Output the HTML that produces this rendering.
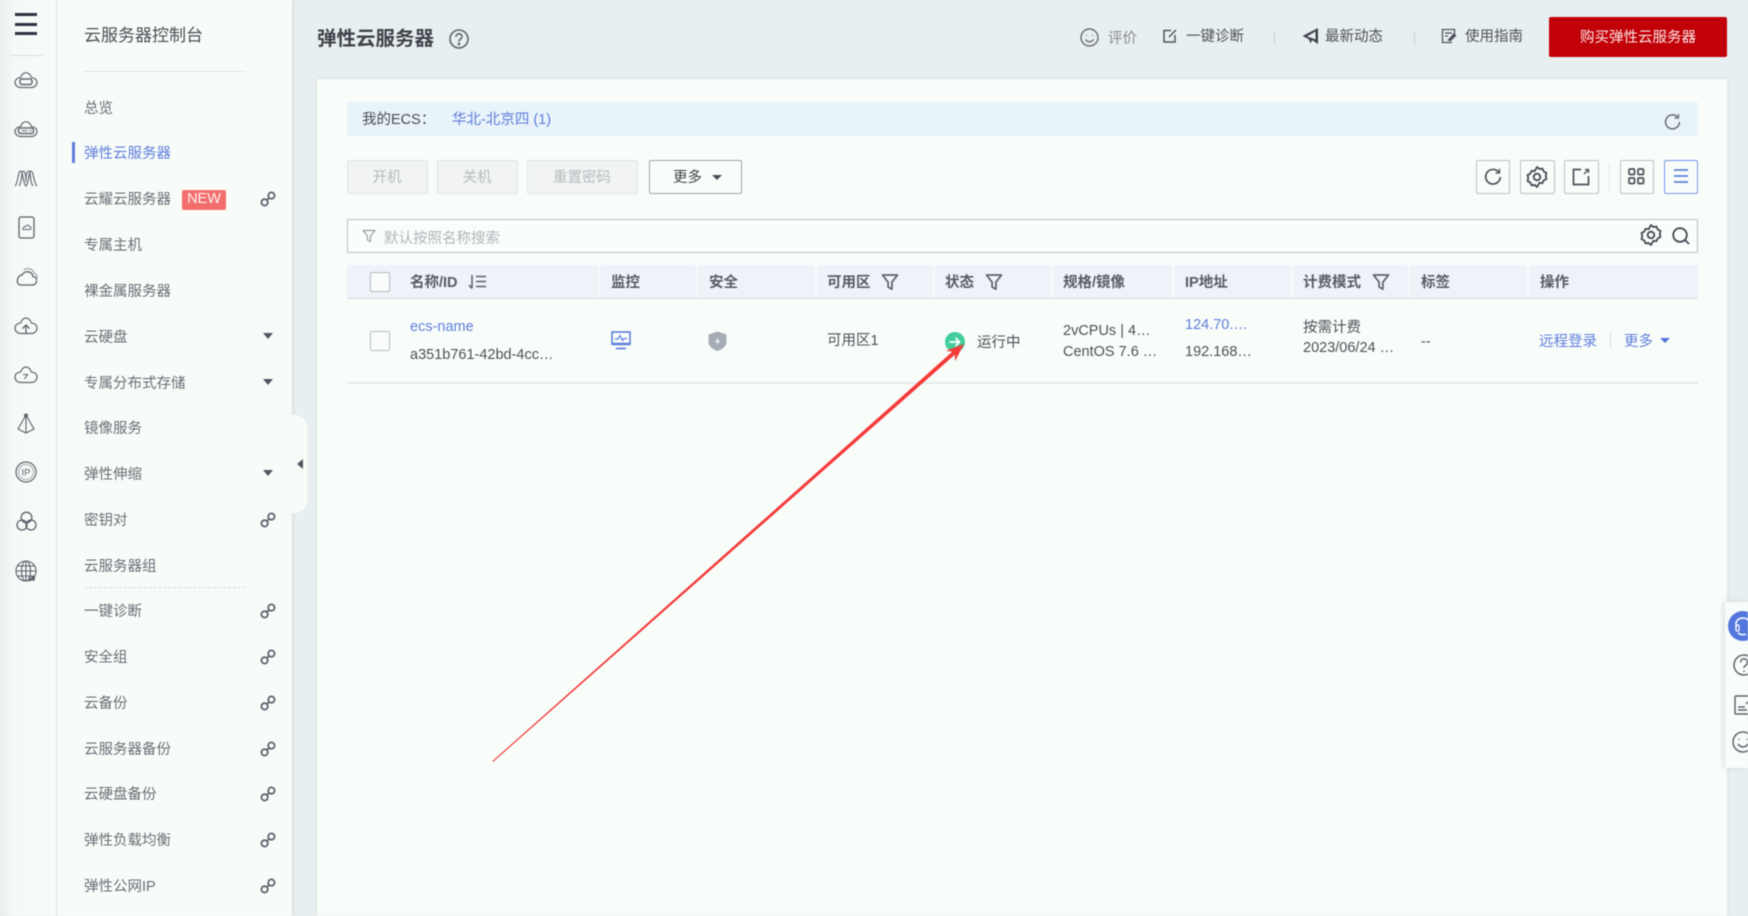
<!DOCTYPE html>
<html lang="zh"><head><meta charset="utf-8"><title>弹性云服务器</title>
<style>
html,body{margin:0;padding:0;width:1748px;height:916px;overflow:hidden;background:#e8eff0}
body{position:relative;font-family:"Liberation Sans","WenQuanYi Zen Hei","Noto Sans CJK SC",sans-serif;font-size:14.5px;color:#4d5158;filter:blur(.55px)}
.a{position:absolute}
.t{position:absolute;line-height:20px;white-space:nowrap;margin-top:1.5px}
.l{margin-top:0;font-size:14.5px}
.s{color:#6a6e76;margin-top:1px}
.b{color:#5f7edb}
.h{color:#565b66;font-weight:bold;font-size:14.5px;margin-top:1px}
svg{position:absolute;overflow:visible;fill:none}
.btn{position:absolute;top:160px;height:32px;border:1px solid #dfe3e4;border-radius:2px;background:#f1f4f3;color:#b7bbbf;text-align:center;line-height:35px;box-sizing:content-box;text-indent:-1px}
.ib{position:absolute;top:160px;height:32px;border:1px solid #b9bfc6;border-radius:2px;background:#f8fdfa;box-sizing:content-box}
.cb{position:absolute;width:18px;height:18px;border:1px solid #b6bbc2;border-radius:2px;background:#fbfdfc}
</style></head><body>
<svg width="0" height="0" style="position:absolute"><defs>
<symbol id="lk" viewBox="0 0 16 16"><g fill="none" stroke="#5c6470" stroke-width="1.800"><circle cx="4.600" cy="11.400" r="3.200"/><circle cx="11.400" cy="4.600" r="3.200"/><path d="M6.600 9.400l2.800-2.800"/></g></symbol>
<symbol id="fl" viewBox="0 0 18 18"><path d="M1.500 2h15l-5.600 7.200v7l-3.800-2.200V9.200z" fill="none" stroke="#5c626c" stroke-width="1.700" stroke-linejoin="round"/></symbol>
<symbol id="gr" viewBox="0 0 20 20"><g fill="none" stroke="#4a4f58" stroke-width="1.700"><path d="M10 1l2.200 1.700 2.700-.3 1.200 2.500 2.400 1.300-.5 2.800.5 2.800-2.400 1.300-1.200 2.500-2.700-.3L10 19l-2.200-1.700-2.700.3-1.200-2.500-2.400-1.300.5-2.800-.5-2.800 2.400-1.300 1.200-2.500 2.700.3z"/><circle cx="10" cy="10" r="3"/></g></symbol>
</defs></svg>

<!-- rail -->
<div class="a" style="left:0;top:0;width:56px;height:916px;background:linear-gradient(90deg,#e9eeee 0,#f5f9f7 14px,#f8fcf9 100%);border-right:1px solid #dde2e3"></div>
<div class="a" style="left:15px;top:13px;width:22px;height:2.500px;background:#2b3242"></div>
<div class="a" style="left:15px;top:23px;width:22px;height:2.500px;background:#2b3242"></div>
<div class="a" style="left:15px;top:32px;width:22px;height:2.500px;background:#2b3242"></div>
<div class="a" style="left:10px;top:55px;width:33px;height:1px;background:#d9dddf"></div>
<svg style="left:14px;top:72px" width="24" height="17" stroke="#62676f" stroke-width="1.200"><path d="M6.500 15.500h11c3 0 5.500-2.500 5.500-5s-2.500-5-5.500-4.800C16.500 2.200 14 .7 12 .7S7.500 2.200 6.500 5.700C3.500 5.500 1 8 1 10.500s2.500 5 5.500 5z"/><rect x="6" y="7" width="12" height="5.500" rx="2" stroke-width="1.500"/></svg>
<svg style="left:14px;top:121px" width="24" height="17" stroke="#62676f" stroke-width="1.200"><path d="M6.500 15.500h11c3 0 5.500-2.500 5.500-5s-2.500-5-5.500-4.800C16.500 2.200 14 .7 12 .7S7.500 2.200 6.500 5.700C3.500 5.500 1 8 1 10.500s2.500 5 5.500 5z"/><rect x="4.500" y="7" width="15" height="5.500" rx="2" stroke-width="1.500"/><path d="M7.500 9.700h6M15.500 9.700h2" stroke-width="1"/></svg>
<svg style="left:14px;top:168px" width="24" height="20" stroke="#5d636d" stroke-width="1.100"><path d="M1 18c3-2 3-15 5.500-15S9 16 12 18c3-2 2.500-15 5-15s3 13 6 15M5 18c3-2 2-15 4.500-15S12 14 12 14M19 18c-3-2-2-15-4.500-15S12 12 12 12"/></svg>
<svg style="left:18px;top:216px" width="17" height="23" stroke="#5d636d" stroke-width="1.300"><rect x="1" y="1" width="15" height="21" rx="2"/><path d="M5.500 13.500h6c2 0 2-2.500 .3-2.700-.5-2-3.800-2-4.500 0-2 0-3.300 2.500-1.800 2.700z" stroke-width="1"/></svg>
<svg style="left:15px;top:267px" width="23" height="20" stroke="#5d636d" stroke-width="1.300"><path d="M6 18h11c6 0 6-8 1-8.500C17 4 10 3 7 8 2 8 0 18 6 18z"/><path d="M9 3c3-3 9-1 10 3 3 1 4 5 2 8" stroke="#a3a8ae"/></svg>
<svg style="left:14px;top:317px" width="24" height="18" stroke="#5d636d" stroke-width="1.200"><path d="M6.500 16.500h11c3 0 5.500-2.500 5.500-5.500s-2.500-5-5.500-4.800C16.500 2.700 14 1 12 1S7.500 2.700 6.500 6.200C3.500 6 1 8 1 11s2.500 5.500 5.500 5.500z"/><path d="M12 16V8.500M8.500 11.500L12 8l3.500 3.500" stroke-width="1.300"/></svg>
<svg style="left:14px;top:366px" width="24" height="18" stroke="#5d636d" stroke-width="1.200"><path d="M6.500 16.500h11c3 0 5.500-2.500 5.500-5.500s-2.500-5-5.500-4.800C16.500 2.700 14 1 12 1S7.500 2.700 6.500 6.200C3.500 6 1 8 1 11s2.500 5.500 5.500 5.500z"/><path d="M9 8.500h4.500l-3 4.500" stroke-width="1.100"/></svg>
<svg style="left:16px;top:413px" width="20" height="22" stroke="#5d636d" stroke-width="1.100"><path d="M10 2L2 16l8 4 8-4zM10 2v18"/><circle cx="10" cy="2.500" r="1.500" fill="#5d636d"/></svg>
<svg style="left:15px;top:461px" width="22" height="22" stroke="#5d636d" stroke-width="1.200"><circle cx="11" cy="11" r="10"/><circle cx="11" cy="11" r="7.500" stroke="#b3b7bc"/><text x="6.500" y="14.500" font-size="9.500" fill="#5d636d" stroke="none" font-family="Liberation Sans">IP</text></svg>
<svg style="left:16px;top:511px" width="21" height="20" stroke="#5d636d" stroke-width="1.300"><circle cx="10.500" cy="6.500" r="5.300"/><circle cx="6" cy="14" r="5"/><circle cx="15" cy="14" r="5"/></svg>
<svg style="left:15px;top:560px" width="22" height="22" stroke="#5d636d" stroke-width="1.100"><circle cx="11" cy="11" r="10"/><ellipse cx="11" cy="11" rx="4.500" ry="10"/><path d="M1 11h20M2.500 6h17M2.500 16h17M11 1v20"/><text x="14" y="21" font-size="8" font-weight="bold" fill="#3b4049" stroke="none" font-family="Liberation Sans">w</text></svg>

<!-- sidebar -->
<div class="a" style="left:57px;top:0;width:235px;height:916px;background:#f8fcf9;box-shadow:1px 0 3px rgba(120,130,135,.18)"></div>
<div class="a" style="left:292px;top:415px;width:15px;height:98px;background:#f8fcf9;border-radius:0 12px 12px 0"></div>
<div class="a" style="left:297px;top:459px;width:0;height:0;border:5px solid transparent;border-left:0;border-right:6px solid #505661"></div>
<div class="t" style="left:84px;top:24px;font-size:17px;color:#4a4e55">云服务器控制台</div>
<div class="a" style="left:84px;top:71px;width:162px;height:1px;background:#dfe3e6"></div>
<div class="a" style="left:72px;top:142px;width:3px;height:21px;background:#5f7edb"></div>
<div class="a" style="left:84px;top:587px;width:162px;height:0;border-top:1px dashed #d5d9dc"></div>
<div class="t s" style="left:84px;top:97.500px">总览</div>
<div class="t b" style="left:84px;top:142.500px">弹性云服务器</div>
<div class="t s" style="left:84px;top:189px">云耀云服务器</div>
<div class="a" style="left:182px;top:190px;width:44px;height:20px;background:#f26d6c;border-radius:2px;color:#fdf3f2;font-size:14.500px;line-height:18px;text-align:center">NEW</div>
<div class="t s" style="left:84px;top:235px">专属主机</div>
<div class="t s" style="left:84px;top:281px">裸金属服务器</div>
<div class="t s" style="left:84px;top:327px">云硬盘</div>
<div class="t s" style="left:84px;top:373px">专属分布式存储</div>
<div class="t s" style="left:84px;top:418px">镜像服务</div>
<div class="t s" style="left:84px;top:464px">弹性伸缩</div>
<div class="t s" style="left:84px;top:510px">密钥对</div>
<div class="t s" style="left:84px;top:556px">云服务器组</div>
<div class="t s" style="left:84px;top:601px">一键诊断</div>
<div class="t s" style="left:84px;top:647px">安全组</div>
<div class="t s" style="left:84px;top:692.500px">云备份</div>
<div class="t s" style="left:84px;top:738.500px">云服务器备份</div>
<div class="t s" style="left:84px;top:784px">云硬盘备份</div>
<div class="t s" style="left:84px;top:829.500px">弹性负载均衡</div>
<div class="t s" style="left:84px;top:875.500px">弹性公网IP</div>
<svg style="left:260px;top:191px" width="16" height="16"><use href="#lk"/></svg>
<svg style="left:260px;top:512px" width="16" height="16"><use href="#lk"/></svg>
<svg style="left:260px;top:603px" width="16" height="16"><use href="#lk"/></svg>
<svg style="left:260px;top:649px" width="16" height="16"><use href="#lk"/></svg>
<svg style="left:260px;top:695px" width="16" height="16"><use href="#lk"/></svg>
<svg style="left:260px;top:741px" width="16" height="16"><use href="#lk"/></svg>
<svg style="left:260px;top:786px" width="16" height="16"><use href="#lk"/></svg>
<svg style="left:260px;top:832px" width="16" height="16"><use href="#lk"/></svg>
<svg style="left:260px;top:878px" width="16" height="16"><use href="#lk"/></svg>
<div class="a" style="left:263px;top:333px;border:5px solid transparent;border-bottom:0;border-top:6px solid #505661"></div>
<div class="a" style="left:263px;top:379px;border:5px solid transparent;border-bottom:0;border-top:6px solid #505661"></div>
<div class="a" style="left:263px;top:470px;border:5px solid transparent;border-bottom:0;border-top:6px solid #505661"></div>

<!-- header -->
<div class="t" style="left:317px;top:27.500px;font-size:19.500px;font-weight:bold;color:#3e4249">弹性云服务器</div>
<svg style="left:449px;top:29px" width="20" height="20" stroke="#5f646d" stroke-width="1.600"><circle cx="10" cy="10" r="9"/><path d="M7 7.800c0-4 6-4 6-.2 0 2.400-3 2.200-3 5"/><circle cx="10" cy="15" r=".6" fill="#5f646d"/></svg>
<svg style="left:1080px;top:28px" width="19" height="19" stroke="#6a6e76" stroke-width="1.400"><circle cx="9.500" cy="9.500" r="8.500"/><path d="M5.500 11.500c2 3 6 3 8 0M6.500 7v.8M12.500 7v.8"/></svg>
<div class="t" style="left:1108px;top:27px;color:#85898f;font-size:14.500px">评价</div>
<svg style="left:1163px;top:29px" width="14" height="14" stroke="#4f545c" stroke-width="1.500"><path d="M8 1.500H1v11.500h11V6M6 8L13 1"/></svg>
<div class="t" style="left:1186px;top:25.500px">一键诊断</div>
<div class="a" style="left:1274px;top:32px;width:1px;height:12px;background:#c9cdd0"></div>
<svg style="left:1302px;top:27px" width="17" height="18"><path d="M16 1v16l-6-4-1.200 3.500L6.500 12 .5 9z M13.500 4.500L5 9.500l5.500 1.700 3 1.300z" fill="#3f444c" fill-rule="evenodd"/></svg>
<div class="t" style="left:1325px;top:25.500px">最新动态</div>
<div class="a" style="left:1414px;top:32px;width:1px;height:12px;background:#c9cdd0"></div>
<svg style="left:1441px;top:28px" width="15" height="16" stroke="#4f545c" stroke-width="1.300"><path d="M11 14.500H1.500v-13h12v5M4 5h7M4 8h3"/><path d="M7.500 12l5.500-6 1.500 1.500-5 5z" fill="#4f545c"/></svg>
<div class="t" style="left:1465px;top:25.500px">使用指南</div>
<div class="a" style="left:1549px;top:17px;width:178px;height:40px;background:#c10007;border-radius:2px;color:#fbe7e7;text-align:center;line-height:43px">购买弹性云服务器</div>

<!-- card -->
<div class="a" style="left:317px;top:79px;width:1410px;height:837px;background:#f8fdfa;box-shadow:0 0 4px rgba(130,140,150,.2)"></div>
<div class="a" style="left:347px;top:102px;width:1351px;height:34px;background:#e9f3fa;border-radius:2px"></div>
<div class="t" style="left:362px;top:108px;color:#4a4e55">我的ECS：</div>
<div class="t b" style="left:452px;top:108px">华北-北京四 (1)</div>
<svg style="left:1664px;top:113px" width="17" height="17" stroke="#676c74" stroke-width="1.500"><path d="M13.800 4.300A7 7 0 1 0 15.500 9"/><path d="M14.500 1v4h-4" stroke-width="1.200"/></svg>

<div class="btn" style="left:347px;width:79px">开机</div>
<div class="btn" style="left:437px;width:79px">关机</div>
<div class="btn" style="left:527px;width:109px">重置密码</div>
<div class="ib" style="left:649px;width:91px;border-color:#9ea4ab;color:#3f434a;line-height:35px"><span class="a" style="left:23px;top:0">更多</span><span class="a" style="left:62px;top:14px;border:5px solid transparent;border-bottom:0;border-top:5px solid #4a4e55"></span></div>

<div class="ib" style="left:1476px;width:32px"></div>
<svg style="left:1484px;top:168px" width="18" height="18" stroke="#4b5058" stroke-width="1.700"><path d="M14.800 4.300A7.300 7.300 0 1 0 16.300 9"/><path d="M15.500 .8v4.200h-4" stroke-width="1.300"/></svg>
<div class="ib" style="left:1520px;width:33px"></div>
<svg style="left:1526px;top:166px" width="22" height="22"><use href="#gr"/></svg>
<div class="ib" style="left:1564px;width:33px"></div>
<svg style="left:1572px;top:168px" width="18" height="18" stroke="#4b5058" stroke-width="1.700"><path d="M9 1.500H1.500v15h15V8"/><path d="M12 6l4-4M13 1.500h3.500V5" stroke-width="1.300"/></svg>
<div class="a" style="left:1609px;top:163px;width:1px;height:28px;background:#e3e6e8"></div>
<div class="ib" style="left:1620px;width:32px"></div>
<svg style="left:1628px;top:168px" width="17" height="17" stroke="#4b5058" stroke-width="1.700"><rect x="1" y="1" width="5.500" height="5.500" rx="1"/><rect x="10" y="1" width="5.500" height="5.500" rx="1"/><rect x="1" y="10" width="5.500" height="5.500" rx="1"/><rect x="10" y="10" width="5.500" height="5.500" rx="1"/></svg>
<div class="ib" style="left:1664px;width:32px;border-color:#7a96e6"></div>
<svg style="left:1672px;top:168px" width="18" height="16" stroke="#5f7edb" stroke-width="1.700"><path d="M2 2h14M2 8h14M2 14h14"/></svg>

<div class="a" style="left:347px;top:219px;width:1349px;height:32px;border:1px solid #b9bfc5;border-radius:2px;background:#f9fdfb"></div>
<svg style="left:362px;top:229px" width="14" height="14"><path d="M1 1.500h12L8.500 7v5.500L5.500 11V7z" stroke="#9a9fa6" stroke-width="1.200" stroke-linejoin="round"/></svg>
<div class="t" style="left:384px;top:227.500px;color:#b2b6ba">默认按照名称搜索</div>
<svg style="left:1640px;top:224px" width="22" height="22"><use href="#gr"/></svg>
<svg style="left:1672px;top:227px" width="18" height="18" stroke="#454a52" stroke-width="1.800"><circle cx="8" cy="8" r="6.800"/><path d="M13 13l4 4"/></svg>

<!-- table -->
<div class="a" style="left:347px;top:265px;width:1351px;height:34px;background:#eff2f8;border-bottom:1px solid #d6dbe3;box-sizing:border-box"></div>
<div class="a" style="left:598px;top:265px;width:2px;height:33px;background:#f8fbfb"></div>
<div class="a" style="left:696px;top:265px;width:2px;height:33px;background:#f8fbfb"></div>
<div class="a" style="left:815px;top:265px;width:2px;height:33px;background:#f8fbfb"></div>
<div class="a" style="left:933px;top:265px;width:2px;height:33px;background:#f8fbfb"></div>
<div class="a" style="left:1051px;top:265px;width:2px;height:33px;background:#f8fbfb"></div>
<div class="a" style="left:1172px;top:265px;width:2px;height:33px;background:#f8fbfb"></div>
<div class="a" style="left:1291px;top:265px;width:2px;height:33px;background:#f8fbfb"></div>
<div class="a" style="left:1408px;top:265px;width:2px;height:33px;background:#f8fbfb"></div>
<div class="a" style="left:1527px;top:265px;width:2px;height:33px;background:#f8fbfb"></div>
<div class="cb" style="left:370px;top:272px"></div>
<div class="t h" style="left:410px;top:272px">名称/ID</div>
<svg style="left:468px;top:274px" width="19" height="16" stroke="#5a5f69" stroke-width="1.500"><path d="M4 1v13M1 11l3 3.500M8 2.500h10M8 7.500h10M8 12.500h10"/></svg>
<div class="t h" style="left:611px;top:272px">监控</div>
<div class="t h" style="left:709px;top:272px">安全</div>
<div class="t h" style="left:827px;top:272px">可用区</div>
<svg style="left:881px;top:273px" width="18" height="18"><use href="#fl"/></svg>
<div class="t h" style="left:945px;top:272px">状态</div>
<svg style="left:985px;top:273px" width="18" height="18"><use href="#fl"/></svg>
<div class="t h" style="left:1063px;top:272px">规格/镜像</div>
<div class="t h" style="left:1185px;top:272px">IP地址</div>
<div class="t h" style="left:1303px;top:272px">计费模式</div>
<svg style="left:1372px;top:273px" width="18" height="18"><use href="#fl"/></svg>
<div class="t h" style="left:1421px;top:272px">标签</div>
<div class="t h" style="left:1540px;top:272px">操作</div>

<div class="cb" style="left:370px;top:331px"></div>
<div class="t b l" style="left:410px;top:317px">ecs-name</div>
<div class="t l" style="left:410px;top:344.500px">a351b761-42bd-4cc…</div>
<svg style="left:611px;top:331px" width="20" height="19" stroke="#5f7edb" stroke-width="1.600"><rect x="1" y="1" width="18" height="12"/><path d="M1 13h18" stroke-width="2.400"/><path d="M5 17.500h10" stroke-width="1.700"/><path d="M4 8h3l2-3.500 2.500 5 1.500-2h3" stroke-width="1.200"/></svg>
<svg style="left:708px;top:331px" width="19" height="20"><path d="M9.500 .5l9 3v7c0 5-4.500 8-9 9.500-4.500-1.500-9-4.500-9-9.500v-7z" fill="#a6acb4"/><path d="M10.500 6L7 11h2.500l-1 3.500 3.500-5H9.500z" fill="#f3f5f6"/></svg>
<div class="t" style="left:827px;top:329.500px">可用区1</div>
<svg style="left:945px;top:332px" width="20" height="20"><circle cx="10" cy="10" r="10" fill="#44cd9c"/><path d="M4.500 10h10M10.500 6l4 4-4 4" stroke="#fff" stroke-width="1.800"/></svg>
<div class="t" style="left:977px;top:331.500px">运行中</div>
<div class="t l" style="left:1063px;top:321px">2vCPUs | 4…</div>
<div class="t l" style="left:1063px;top:342px">CentOS 7.6 …</div>
<div class="t b l" style="left:1185px;top:314.500px">124.70.…</div>
<div class="t l" style="left:1185px;top:342px">192.168…</div>
<div class="t" style="left:1303px;top:316.500px">按需计费</div>
<div class="t l" style="left:1303px;top:338px">2023/06/24 …</div>
<div class="t" style="left:1421px;top:330px">--</div>
<div class="t b" style="left:1539px;top:330px">远程登录</div>
<div class="a" style="left:1610px;top:333px;width:1px;height:14px;background:#d5d9dd"></div>
<div class="t b" style="left:1624px;top:330px">更多</div>
<div class="a" style="left:1660px;top:338px;border:5px solid transparent;border-bottom:0;border-top:5px solid #4f70d8"></div>
<div class="a" style="left:347px;top:382px;width:1351px;height:2px;background:#e6eaec"></div>

<!-- float panel -->
<div class="a" style="left:1725px;top:602px;width:23px;height:166px;background:#f8fcfa;box-shadow:-2px 0 5px rgba(120,130,140,.22);overflow:hidden">
<svg style="left:3px;top:9px" width="30" height="30"><circle cx="15" cy="15" r="15" fill="#5477de"/><path d="M8 17v-4c0-8 14-8 14 0M10 22c3 2 6 2 8 1" stroke="#fff" stroke-width="1.500"/><rect x="8" y="14" width="3" height="6" rx="1" stroke="#fff" stroke-width="1.200"/></svg>
<svg style="left:8px;top:52px" width="22" height="22" stroke="#62676f" stroke-width="1.500"><circle cx="11" cy="11" r="10"/><path d="M7.500 8.500c0-5 7-5 7 0 0 3-3.500 2.500-3.500 5.500M11 16.500v1.500"/></svg>
<svg style="left:9px;top:93px" width="22" height="20" stroke="#62676f" stroke-width="1.500"><rect x="1" y="1" width="22" height="18" rx="1"/><path d="M4 12h7M4 15h9M12 9l6-6"/></svg>
<svg style="left:7px;top:129px" width="22" height="22" stroke="#62676f" stroke-width="1.500"><circle cx="11" cy="11" r="10"/><path d="M6 13c3 4 7 4 10 0M7 8v1M15 8v1"/></svg>
</div>

<!-- arrow -->
<svg style="left:0;top:0" width="1748" height="916"><polygon points="493,762 954.800,354.800 955.100,361.200 964,344 945.900,350.800 952.200,351.800 492.500,761" fill="#f53a3a"/></svg>
</body></html>
